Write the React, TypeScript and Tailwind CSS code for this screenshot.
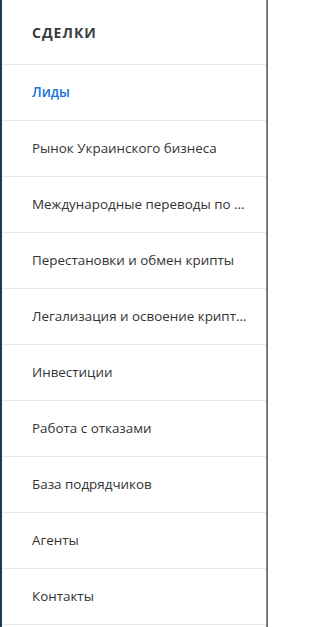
const items = [
  "Лиды",
  "Рынок Украинского бизнеса",
  "Международные переводы по странам",
  "Перестановки и обмен крипты",
  "Легализация и освоение криптовалюты",
  "Инвестиции",
  "Работа с отказами",
  "База подрядчиков",
  "Агенты",
  "Контакты",
];

export default function App() {
  return (
    <div className="flex h-[627px] w-[268px] overflow-hidden bg-white font-['Open_Sans',sans-serif]">
      <div className="w-[2px] shrink-0 bg-[#1c3a50]" />
      <nav className="flex min-w-0 flex-1 flex-col border-r border-[#8c8c8c]">
        <div className="flex h-[65px] shrink-0 items-center border-b border-[#e6e6e6] pl-[30px]">
          <span className="text-[14px] font-bold uppercase tracking-[1px] text-[#3a3c40]">Сделки</span>
        </div>
        {items.map((item, i) => (
          <div
            key={item}
            className="flex h-[56px] shrink-0 items-center border-b border-[#e6e6e6] pl-[30px] pr-[17px]"
          >
            <span
              className={
                i === 0
                  ? "truncate text-[13.4px] font-semibold text-[#1a74d6]"
                  : "truncate text-[13.4px] text-[#333333]"
              }
            >
              {item}
            </span>
          </div>
        ))}
      </nav>
      <div className="w-[1px] shrink-0 bg-[#6b6b5c]" />
    </div>
  );
}
